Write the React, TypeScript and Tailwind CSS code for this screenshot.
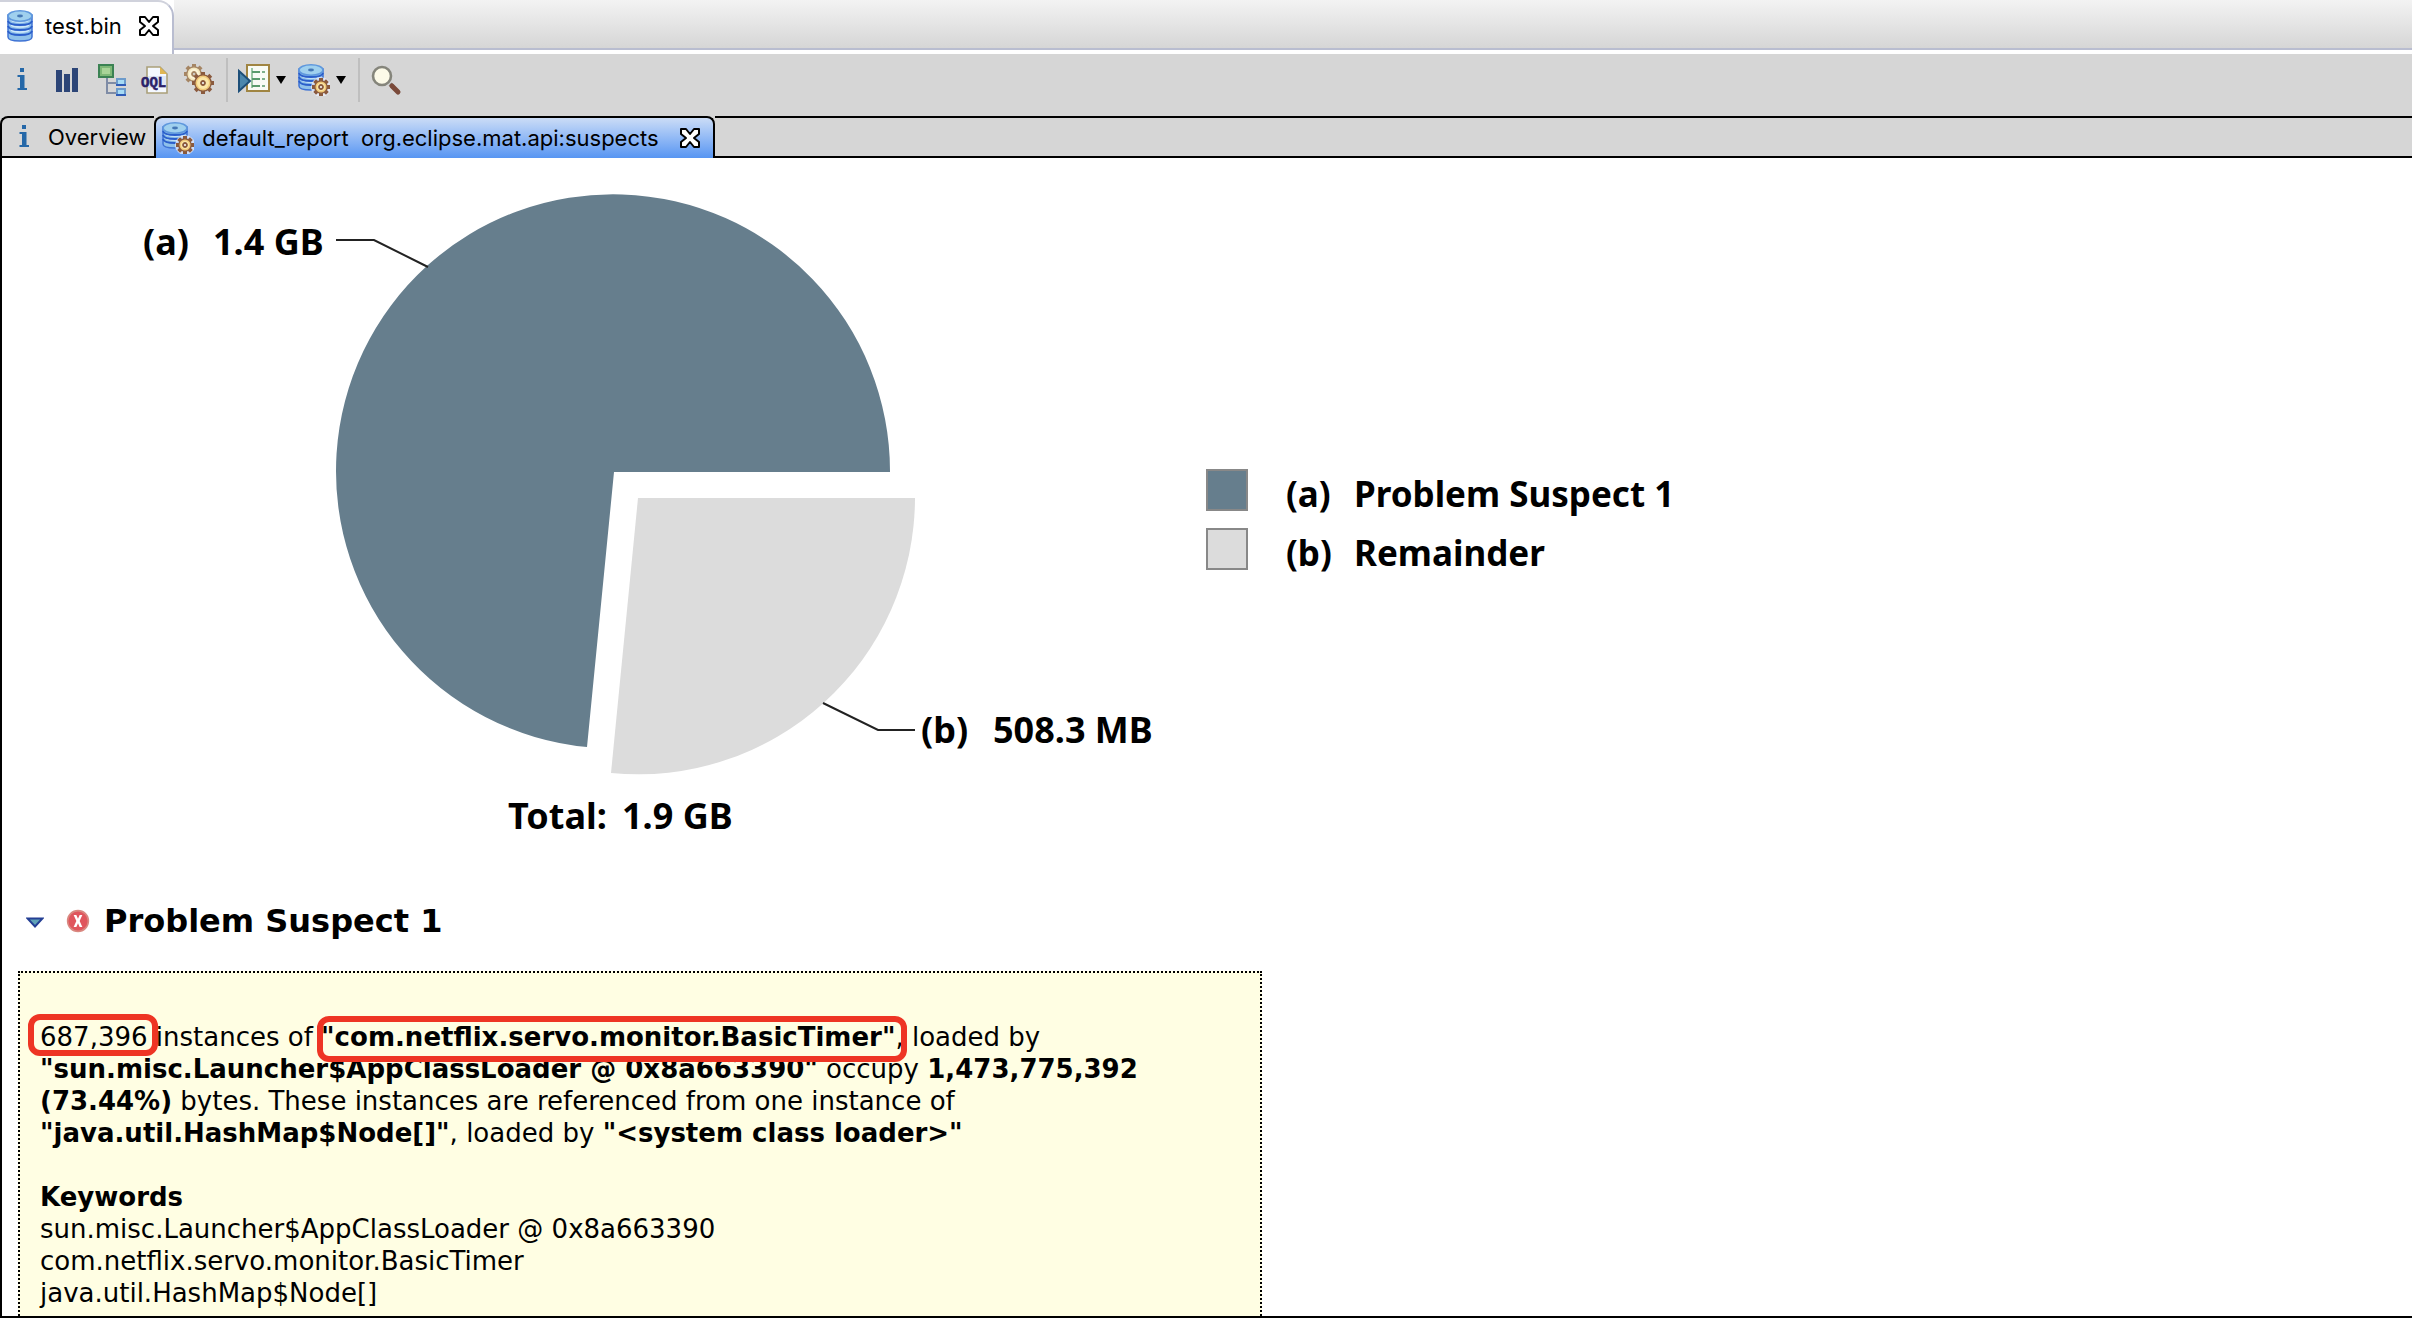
import React from "react";

function DbShape({ small }: { small?: boolean }) {
  const rows = small ? [15, 11, 7] : [19, 14, 9];
  const bottom = small ? 26 : 31;
  return (
    <g>
      <path
        d={`M1 5 V${bottom - 4} Q1 ${bottom} 13 ${bottom} Q25 ${bottom} 25 ${bottom - 4} V5 Z`}
        fill="#8fc1ea"
        stroke="#3f73d4"
        strokeWidth="1.5"
      />
      {rows.map((y) => (
        <g key={y}>
          <path
            d={`M1 ${y + 2} Q2 ${y + 6} 13 ${y + 6} Q24 ${y + 6} 25 ${y + 2}`}
            fill="none"
            stroke="#2b5fcb"
            strokeWidth="2"
          />
          <path
            d={`M4 ${y + 1} Q7 ${y + 3} 13 ${y + 3} Q19 ${y + 3} 22 ${y + 1}`}
            fill="none"
            stroke="#cfe9fa"
            strokeWidth="1.6"
          />
        </g>
      ))}
      <ellipse cx="13" cy="6" rx="12" ry="5.2" fill="#9fd0ee" stroke="#5f98dd" strokeWidth="1.6" />
      <ellipse cx="13" cy="6" rx="3" ry="1.4" fill="#4577b5" />
    </g>
  );
}

function Gear({ cx, cy, r, pale }: { cx: number; cy: number; r: number; pale?: boolean }) {
  const dark = pale ? "#a58563" : "#8a5a3e";
  return (
    <g transform={`translate(${cx} ${cy})`}>
      {[0, 45, 90, 135, 180, 225, 270, 315].map((a) => (
        <g key={a} transform={`rotate(${a})`}>
          <rect x="-2" y={-r} width="4" height="4" fill={dark} />
        </g>
      ))}
      <circle r={r - 2.8} fill={pale ? "#f3e6bd" : "#efc878"} stroke={dark} strokeWidth="1.3" />
      <circle r={r - 5} fill={pale ? "#fbf3d6" : "#fbe7a8"} />
      <circle r="2" fill={pale ? "#d6d6d6" : "#f4f4f4"} stroke={dark} strokeWidth="1.8" />
    </g>
  );
}

const DbIcon = () => (
  <svg width="26" height="32" viewBox="0 0 26 32" aria-hidden="true">
    <DbShape />
  </svg>
);

const DbGearIcon = () => (
  <svg width="32" height="32" viewBox="0 0 32 32" aria-hidden="true">
    <DbShape small />
    <circle cx="23" cy="23" r="10" fill="#e8eefa" opacity="0.8" />
    <Gear cx={23} cy={23} r={9} />
  </svg>
);

const InfoIcon = () => (
  <svg width="32" height="32" viewBox="0 0 32 32" aria-hidden="true">
    <path d="M12 4h4v4h-4z M9.500 11h7v13h2.500v2h-9.500v-2h2.500v-11h-2.500z" fill="#2568a8" />
  </svg>
);

const BarsIcon = () => (
  <svg width="32" height="32" viewBox="0 0 32 32" aria-hidden="true">
    <path d="M4 6h6v22h-6z M12 10h6v18h-6z M20 4h6v24h-6z" fill="#2c4577" />
  </svg>
);

const TreeIcon = () => (
  <svg width="32" height="32" viewBox="0 0 32 32" aria-hidden="true">
    <path d="M11 14v15h9M11 19h9" fill="none" stroke="#7f8ca6" strokeWidth="2" />
    <rect x="3" y="1" width="14" height="12" fill="#7fb877" stroke="#3b8253" strokeWidth="2" />
    <rect x="6" y="4" width="8" height="6" fill="#a9d498" />
    <rect x="21" y="15" width="8" height="6" fill="#a6dbf5" stroke="#6d9bcb" strokeWidth="2" />
    <path d="M20 21h10" stroke="#2f5cb8" strokeWidth="2" />
    <rect x="21" y="25" width="8" height="6" fill="#a6dbf5" stroke="#6d9bcb" strokeWidth="2" />
    <path d="M20 31h10" stroke="#2f5cb8" strokeWidth="2" />
  </svg>
);

const OqlIcon = () => (
  <svg width="32" height="32" viewBox="0 0 32 32" aria-hidden="true">
    <path d="M7 3h13l7 7v19H7z" fill="#f4f8ff" stroke="#aaa07a" strokeWidth="1.6" />
    <path d="M20 3v7h7z" fill="#e0b653" />
    <rect x="8" y="12" width="18" height="12" fill="#dfe6f4" />
    <text
      x="1"
      y="23"
      fontFamily="Liberation Mono, monospace"
      fontWeight="700"
      fontSize="14"
      fill="#2a2168"
      stroke="#2a2168"
      strokeWidth="0.5"
    >
      OQL
    </text>
  </svg>
);

const GearsIcon = () => (
  <svg width="32" height="32" viewBox="0 0 32 32" aria-hidden="true">
    <Gear cx={10} cy={10} r={10} pale />
    <Gear cx={19} cy={19} r={11} />
  </svg>
);

const RunReportIcon = () => (
  <svg width="32" height="32" viewBox="0 0 32 32" aria-hidden="true">
    <rect x="9" y="1" width="22" height="26" fill="#f8fbf5" stroke="#a08542" strokeWidth="2" />
    <path d="M14 4v20" stroke="#9cc7a5" strokeWidth="2" />
    <path d="M14 8h8M14 15h8M14 22h8" stroke="#5a9a6c" strokeWidth="2" />
    <path d="M24 8h3M24 15h3M24 22h3" stroke="#7fb08c" strokeWidth="2" />
    <path d="M1 7v20l11-10z" fill="#4b87ad" stroke="#1d4f79" strokeWidth="2" />
  </svg>
);

const SearchIcon = () => (
  <svg width="32" height="32" viewBox="0 0 32 32" aria-hidden="true">
    <path d="M20 20l3 3" stroke="#8a8a84" strokeWidth="4" />
    <path d="M22 22l6 6" stroke="#7a4a3a" strokeWidth="5" strokeLinecap="round" />
    <circle cx="12" cy="12" r="9" fill="#fcfae8" stroke="#85857b" strokeWidth="2.600" />
  </svg>
);

const CloseIcon = () => (
  <svg width="22" height="22" viewBox="0 0 22 22" aria-hidden="true">
    <path
      d="M2 2H7L11 7L15 2H20V7L15 11L20 15V20H15L11 15L7 20H2V15L7 11L2 7Z"
      fill="#fff"
      stroke="#000"
      strokeWidth="2"
      strokeLinejoin="round"
    />
  </svg>
);

const Caret = () => (
  <svg width="10" height="8" viewBox="0 0 10 8" aria-hidden="true">
    <path d="M0 0h10L5 8z" fill="#000" />
  </svg>
);

function ToolButton({ label, children }: { label: string; children: React.ReactNode }) {
  return (
    <button type="button" aria-label={label} className="flex items-center gap-1.5">
      {children}
    </button>
  );
}

function PieChart() {
  return (
    <svg
      width="1180"
      height="700"
      viewBox="0 158 1180 700"
      className="shrink-0"
      role="img"
      aria-label="Retained heap by suspect"
    >
      <path d="M614 472H890A277 277 0 1 0 587 747Z" fill="#667e8d" />
      <path d="M638 498H915A277 277 0 0 1 611 773Z" fill="#dcdcdc" />
      <g fill="none" stroke="#222" strokeWidth="2">
        <path d="M336 240H374L428 267" />
        <path d="M823 703L878 730H915" />
      </g>
      <g fontFamily="'Noto Sans', sans-serif" fontWeight="700" fontSize="36" fill="#000">
        <text x="143" y="255">(a)</text>
        <text x="213" y="255">1.4 GB</text>
        <text x="921" y="743">(b)</text>
        <text x="993" y="743">508.3 MB</text>
        <text x="508" y="829">Total:</text>
        <text x="622" y="829">1.9 GB</text>
      </g>
    </svg>
  );
}

const legend = [
  { key: "(a)", name: "Problem Suspect 1", swatch: "bg-[#667e8d]" },
  { key: "(b)", name: "Remainder", swatch: "bg-[#dcdcdc]" },
];

function Marked({ children, wide }: { children: React.ReactNode; wide?: boolean }) {
  return (
    <span className="relative">
      {children}
      <span
        className={
          wide
            ? "absolute -left-1 -right-3 -top-1.5 -bottom-2.5 rounded-xl border-6 border-[#ee3524]"
            : "absolute -left-3 -right-2.5 -top-2 -bottom-1 rounded-xl border-6 border-[#ee3524]"
        }
      />
    </span>
  );
}

export default function App() {
  return (
    <div className="flex h-screen flex-col overflow-hidden bg-white font-[Inter,sans-serif] text-[22px] text-black">
      <header className="flex h-[54px] shrink-0 bg-white">
        <div className="flex items-center gap-3 rounded-tr-2xl border-t-2 border-r-2 border-[#b9bdd0] border-t-[#d0d2dc] pr-3 pb-1 pl-[7px]">
          <DbIcon />
          <span>test.bin</span>
          <button type="button" aria-label="Close test.bin" className="ml-1">
            <CloseIcon />
          </button>
        </div>
        <div className="h-[50px] flex-1 border-b-2 border-[#b9bdd0] bg-linear-to-b from-[#f3f3f3] to-[#d6d6d6]" />
      </header>

      <div className="flex h-[62px] shrink-0 items-start bg-[#d6d6d6] pt-1 pl-2" role="toolbar">
        <div className="flex gap-3 pt-1.5">
          <ToolButton label="Overview"><InfoIcon /></ToolButton>
          <ToolButton label="Histogram"><BarsIcon /></ToolButton>
          <ToolButton label="Dominator tree"><TreeIcon /></ToolButton>
          <ToolButton label="Object query language"><OqlIcon /></ToolButton>
          <ToolButton label="Thread overview"><GearsIcon /></ToolButton>
        </div>
        <div className="ml-2.5 h-11 w-0.5 bg-[#bfbfbf]" />
        <div className="ml-2.5 flex gap-3 pt-1.5">
          <ToolButton label="Run report"><RunReportIcon /><Caret /></ToolButton>
          <ToolButton label="Query browser"><DbGearIcon /><Caret /></ToolButton>
        </div>
        <div className="ml-3 h-11 w-0.5 bg-[#bfbfbf]" />
        <div className="ml-2.5 pt-1.5">
          <ToolButton label="Find object"><SearchIcon /></ToolButton>
        </div>
      </div>

      <div className="flex h-[42px] shrink-0 bg-[#d6d6d6]" role="tablist">
        <button
          type="button"
          role="tab"
          aria-selected="false"
          className="flex items-center gap-1.5 rounded-tl-lg border-y-2 border-l-2 border-black pr-2 pl-2"
        >
          <InfoIcon />
          Overview
        </button>
        <div
          role="tab"
          aria-selected="true"
          className="flex items-center rounded-t-lg border-x-2 border-t-2 border-black bg-linear-to-b from-[#cbdcf6] to-[#5795f2] pr-3 pl-1.5"
        >
          <DbGearIcon />
          <span className="ml-2 whitespace-pre">default_report  org.eclipse.mat.api:suspects</span>
          <button type="button" aria-label="Close report" className="ml-5">
            <CloseIcon />
          </button>
        </div>
        <div className="flex-1 border-y-2 border-black" />
      </div>

      <main className="mb-1 min-h-0 flex-1 overflow-y-auto border-b-2 border-l-2 border-black [scrollbar-width:none]">
        <section className="-ml-0.5 flex">
          <PieChart />
          <ul className="flex flex-col pt-[309px] pl-[26px] font-['Noto_Sans',sans-serif] text-[35px] leading-[54px] font-bold">
            {legend.map((item) => (
              <li key={item.key} className="flex h-[59px] items-start">
                <span className={`mt-0.5 size-[42px] border-2 border-[#888] ${item.swatch}`} />
                <span className="w-[106px] pl-[38px]">{item.key}</span>
                <span>{item.name}</span>
              </li>
            ))}
          </ul>
        </section>

        <section className="pl-4 font-[Verdana,'DejaVu_Sans',sans-serif]">
          <h2 className="flex h-[113px] items-center pt-3 pl-2 text-[32px] font-bold">
            <button type="button" aria-label="Collapse section" className="pt-1">
              <svg width="18" height="12" viewBox="0 0 18 12" aria-hidden="true">
                <path d="M1.500 1.500h15L9 9.500z" fill="#5fa3b8" stroke="#243f94" strokeWidth="2" />
              </svg>
            </button>
            <svg className="mr-3.5 ml-[22px]" width="24" height="24" viewBox="0 0 22 22" aria-hidden="true">
              <circle cx="11" cy="11" r="9.500" fill="#e0555c" stroke="#d98880" strokeWidth="1.500" />
              <path d="M7 5.500h2.500L11 9l1.500-3.500h2.500L12.500 11l2.500 5.500h-2.500L11 13l-1.500 3.500H7L9.500 11z" fill="#fff" />
            </svg>
            Problem Suspect 1
          </h2>
          <div className="w-full max-w-[1244px] border-2 border-dotted border-black bg-[#fffee3] px-5 pt-12 pb-16 text-[26px] leading-8 whitespace-nowrap">
            <p>
              <Marked>687,396</Marked> instances of{" "}
              <b><Marked wide>"com.netflix.servo.monitor.BasicTimer"</Marked></b>, loaded by
              <br />
              <b>"sun.misc.Launcher$AppClassLoader @ 0x8a663390"</b> occupy <b>1,473,775,392</b>
              <br />
              <b>(73.44%)</b> bytes. These instances are referenced from one instance of
              <br />
              <b>"java.util.HashMap$Node[]"</b>, loaded by <b>"&lt;system class loader&gt;"</b>
            </p>
            <h3 className="mt-8 font-bold">Keywords</h3>
            <p>sun.misc.Launcher$AppClassLoader @ 0x8a663390</p>
            <p>com.netflix.servo.monitor.BasicTimer</p>
            <p>java.util.HashMap$Node[]</p>
          </div>
        </section>
      </main>
    </div>
  );
}
